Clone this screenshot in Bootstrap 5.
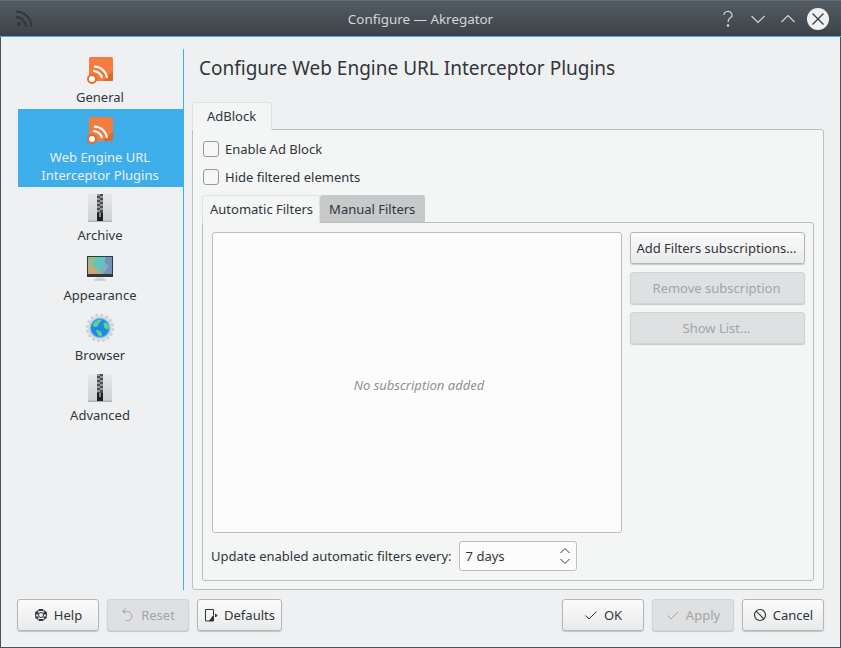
<!DOCTYPE html>
<html lang="en">
<head>
  <meta charset="UTF-8">
  <title>Configure — Akregator</title>
  <meta name="viewport" content="width=device-width, initial-scale=1">
  <link href="https://cdn.jsdelivr.net/npm/bootstrap@5.3.3/dist/css/bootstrap.min.css" rel="stylesheet">
  <style>
    html, body { height: 100%; }
    body { font-family: "Noto Sans", sans-serif; font-size: 13px; line-height: 18px; color: #31363b; background: #eff0f1; overflow: hidden; }
    svg { display: block; flex: none; }
    .kwin { width: 841px; height: 648px; }
    .ktitle { height: 37px; background: linear-gradient(#535c62, #3b4349); border-top: 1px solid #626b70; border-bottom: 1px solid #3daee9; color: #d3d6d8; padding: 0 12px 0 15px; }
    .ktitle-text { left: 0; right: 0; top: 9px; text-align: center; font-size: 13.4px; }
    .kctl { width: 30px; height: 22px; }
    .kclose { width: 22px; height: 22px; background: #eff0f1; border-radius: 50%; margin-left: 4px; }
    .kbody { border: 1px solid #4a5258; border-top: 0; padding: 12px 16px 16px; min-height: 0; }
    .kside { width: 166px; margin-left: 1px; margin-right: 8px; border-right: 1px solid #3daee9; border-radius: 0; padding: 0; }
    .kside .list-group-item { background: transparent; border: 0; border-radius: 0; margin: 0; padding: 5px 9px 3px 8px; color: #31363b; text-align: center; }
    .kside .list-group-item.active { margin-top: 0; background: #3daee9; color: #eff0f1; }
    .kside .list-group-item svg { margin: 0 auto 2px; }
    .khead { height: 53px; margin: 0 0 0 7px; font-size: 19px; font-weight: 400; line-height: 38px; color: #31363b; }
    .ktabs { border: 0; flex-wrap: nowrap; position: relative; z-index: 1; }
    .ktabs .nav-link { font-size: 13px; height: 28px; margin-bottom: -1px; padding: 4px 6px 4px 7px; color: #31363b; background: #c8c9cb; border: 1px solid #bcbebf; border-bottom-color: #bcbebf; border-radius: 3px 3px 0 0; }
    .ktabs .nav-link.active { background: #f4f5f5; border-bottom-color: #f4f5f5; color: #31363b; }
    .ktabs .ktab-main { width: 80px; padding-left: 14px; }
    .ktabs .ktab-manual { border-left: 0; border-color: #c8c9cb; border-bottom-color: #bcbebf; padding: 4px 9px 4px 9px; }
    .kpane { background: #f4f5f5; border: 1px solid #bcbebf; border-radius: 0 3px 3px 3px; min-height: 0; }
    .kpane-outer { padding: 9px 9px 8px; }
    .kpane-inner { padding: 9px 8px 9px 9px; gap: 8px; }
    .kcheck { height: 20px; min-height: 0; margin: 0 0 8px 1px; padding: 0; gap: 6px; }
    .kcheck .form-check-input { width: 16px; height: 16px; margin: 0; float: none; background-color: #f6f6f7; border: 1px solid #96999b; border-radius: 3px; }
    .kcheck .form-check-label { line-height: 20px; }
    .kblank { width: 410px; flex: none; background: #fcfcfc; border: 1px solid #bcbebf; border-radius: 3px; color: #8f9295; font-style: italic; padding: 4px 0 0 4px; }
    .kbtn { height: 32px; padding: 0 6px; font-size: 13px; line-height: 18px; color: #31363b; background: linear-gradient(#fbfbfb, #e9eaeb); border: 1px solid #b4b6b8; border-radius: 3px; box-shadow: 0 1px 1px rgba(0, 0, 0, .18); gap: 6px; }
    .kbtn:disabled { opacity: 1; color: #a3a5a8; background: #dfe0e1; border-color: #d2d3d4; }
    .kbtn-wide { width: 175px; padding: 0 7px 0 5px; }
    .kfoot { width: 82px; }
    .kfoot-auto { width: 85px; }
    .kcol { gap: 8px; width: 175px; margin-left: 8px; }
    .kspin { width: 118px; height: 30px; background: #fcfcfc; border: 1px solid #bcbebf; border-radius: 3px; padding: 0 5px 0 6px; margin-left: 7px; }
    .kupdate { height: 30px; padding-left: 0; margin-left: -1px; }
    .kmain { min-width: 0; }
    .kfooter { margin-top: 9px; }
  </style>
</head>
<body>
<div class="kwin d-flex flex-column">

  <!-- Title bar -->
  <div class="ktitle d-flex align-items-center position-relative flex-none">
    <svg width="18" height="18" viewBox="0 0 18 18" fill="none" stroke="#31383d" stroke-width="2"><circle cx="4" cy="14" r="2" fill="#31383d" stroke="none"/><path d="M1 7a10 10 0 0 1 10 10"/><path d="M1 1.500a15.500 15.500 0 0 1 15.500 15.500"/></svg>
    <div class="ktitle-text position-absolute">Configure — Akregator</div>
    <div class="ms-auto d-flex align-items-center">
      <div class="kctl d-flex align-items-center justify-content-center"><svg width="14" height="18" viewBox="0 0 14 18" fill="none" stroke="#d3d6d8" stroke-width="1.200"><path d="M3 5a4 3.500 0 1 1 6 3c-1.500 1-2 1.500-2 4"/><circle cx="7" cy="15.500" r=".7" fill="#d3d6d8"/></svg></div>
      <div class="kctl d-flex align-items-center justify-content-center"><svg width="16" height="10" viewBox="0 0 16 10" fill="none" stroke="#d3d6d8" stroke-width="1.200"><path d="M1.500 2l6.500 6.500 6.500-6.500"/></svg></div>
      <div class="kctl d-flex align-items-center justify-content-center"><svg width="16" height="10" viewBox="0 0 16 10" fill="none" stroke="#d3d6d8" stroke-width="1.200"><path d="M1.500 8l6.500-6.500 6.500 6.500"/></svg></div>
      <div class="kclose d-flex align-items-center justify-content-center"><svg width="14" height="14" viewBox="0 0 14 14" fill="none" stroke="#3b4349" stroke-width="1.400"><path d="M1.500 1.500l11 11M12.500 1.500l-11 11"/></svg></div>
    </div>
  </div>

  <div class="kbody d-flex flex-column flex-grow-1">
    <div class="d-flex flex-grow-1" style="min-height:0">

      <!-- Sidebar -->
      <div class="kside list-group flex-none">
        <div class="list-group-item">
          <svg width="32" height="32" viewBox="0 0 32 32"><rect x="5" y="3" width="24" height="24" rx="1.500" fill="#f47c3f"/><path d="M19 27l10-10v9a1 1 0 0 1-1 1z" fill="#dd6a30"/><g fill="none" stroke="#fff" stroke-width="2"><path d="M9 17a9 9 0 0 1 9 7"/><path d="M10 12.500a13 13 0 0 1 13 11.500"/></g><circle cx="8" cy="25" r="4" fill="#fff" stroke="#e8692c" stroke-width="2"/></svg>
          General
        </div>
        <div class="list-group-item active">
          <svg width="32" height="32" viewBox="0 0 32 32"><rect x="5" y="3" width="24" height="24" rx="1.500" fill="#f47c3f"/><path d="M19 27l10-10v9a1 1 0 0 1-1 1z" fill="#dd6a30"/><g fill="none" stroke="#fff" stroke-width="2"><path d="M9 17a9 9 0 0 1 9 7"/><path d="M10 12.500a13 13 0 0 1 13 11.500"/></g><circle cx="8" cy="25" r="4" fill="#fff" stroke="#e8692c" stroke-width="2"/></svg>
          Web Engine URL<br>Interceptor Plugins
        </div>
        <div class="list-group-item">
          <svg width="32" height="32" viewBox="0 0 32 32"><defs><linearGradient id="zipbg" x1="0" y1="0" x2="0" y2="1"><stop offset="0" stop-color="#e6e8e9"/><stop offset="1" stop-color="#cdd1d2"/></linearGradient></defs><rect x="4" y="2" width="24" height="28" fill="url(#zipbg)"/><rect x="4" y="28.500" width="24" height="1.500" fill="#aeb2b3"/><rect x="13" y="2" width="6" height="27" fill="#4a4e51"/><path d="M13 3h3M16 5h3M13 7h3M16 9h3M13 11h3M16 13h3M13 15h3M16 17h3M13 19h3" stroke="#dfe2e3" stroke-width="1"/><rect x="13" y="21" width="6" height="8" fill="#1e2022"/><rect x="15" y="21" width="2" height="4" fill="#878b8e"/></svg>
          Archive
        </div>
        <div class="list-group-item">
          <svg width="32" height="32" viewBox="0 0 32 32"><path d="M12.500 25h7l.5 3h-8z" fill="#d9dcdd"/><rect x="10" y="27.500" width="12" height="1" fill="#b8bbbd"/><rect x="3" y="4" width="26" height="21" fill="#35383b"/><rect x="4" y="5" width="24" height="17" fill="#6fb3bb"/><path d="M4 5h9l-4 8H4z" fill="#8fc08c"/><path d="M4 13h5l8 9H4z" fill="#c6a978"/><path d="M13 5h9l-5 17-8-9z" fill="#5fc6bf"/><path d="M22 5h6v17H17z" fill="#7391b6"/><path d="M20 10l5 4-6 8h-2z" fill="#86aeb4"/></svg>
          Appearance
        </div>
        <div class="list-group-item">
          <svg width="32" height="32" viewBox="0 0 32 32"><circle cx="16" cy="16" r="12" fill="#d6d9da"/><circle cx="16" cy="16" r="13" fill="none" stroke="#cfd2d3" stroke-width="2.500" stroke-dasharray="3 2.100"/><circle cx="16" cy="16" r="10" fill="#4fb4ee"/><circle cx="16" cy="16" r="9" fill="#1f8ae6"/><path d="M8.500 13c2-4 5-5.500 9-5.500 0 2-2 2.500-3 4.500s-1 3-3 3-2-1-3-2zM20 11c2-1 4 .5 5 3 0 2.500-1 3-2 4-1-2-3-1.500-3-3.500s-1-2.500 0-3.500zM12 18c3 0 6 2 6 4s-1 2.500-2 3c-2-2-3-4-4-7z" fill="#63cf8b"/></svg>
          Browser
        </div>
        <div class="list-group-item">
          <svg width="32" height="32" viewBox="0 0 32 32"><rect x="4" y="2" width="24" height="28" fill="url(#zipbg)"/><rect x="4" y="28.500" width="24" height="1.500" fill="#aeb2b3"/><rect x="13" y="2" width="6" height="27" fill="#4a4e51"/><path d="M13 3h3M16 5h3M13 7h3M16 9h3M13 11h3M16 13h3M13 15h3M16 17h3M13 19h3" stroke="#dfe2e3" stroke-width="1"/><rect x="13" y="21" width="6" height="8" fill="#1e2022"/><rect x="15" y="21" width="2" height="4" fill="#878b8e"/></svg>
          Advanced
        </div>
      </div>

      <!-- Main page -->
      <div class="kmain d-flex flex-column flex-grow-1">
        <h1 class="khead">Configure Web Engine URL Interceptor Plugins</h1>
        <ul class="nav nav-tabs ktabs">
          <li class="nav-item"><a class="nav-link active ktab-main" href="#">AdBlock</a></li>
        </ul>
        <div class="kpane kpane-outer d-flex flex-column flex-grow-1">
          <div class="form-check kcheck d-flex align-items-center">
            <input class="form-check-input" type="checkbox" id="enableAd">
            <label class="form-check-label" for="enableAd">Enable Ad Block</label>
          </div>
          <div class="form-check kcheck d-flex align-items-center">
            <input class="form-check-input" type="checkbox" id="hideEl">
            <label class="form-check-label" for="hideEl">Hide filtered elements</label>
          </div>

          <ul class="nav nav-tabs ktabs">
            <li class="nav-item"><a class="nav-link active" href="#">Automatic Filters</a></li>
            <li class="nav-item"><a class="nav-link ktab-manual" href="#">Manual Filters</a></li>
          </ul>
          <div class="kpane kpane-inner d-flex flex-column flex-grow-1">
            <div class="d-flex flex-grow-1" style="min-height:0">
              <div class="kblank d-flex align-items-center justify-content-center">No subscription added</div>
              <div class="kcol d-flex flex-column">
                <button class="btn kbtn kbtn-wide" type="button">Add Filters subscriptions...</button>
                <button class="btn kbtn kbtn-wide" type="button" disabled>Remove subscription</button>
                <button class="btn kbtn kbtn-wide" type="button" disabled>Show List...</button>
              </div>
            </div>
            <div class="kupdate d-flex align-items-center">
              <span>Update enabled automatic filters every:</span>
              <div class="kspin d-flex align-items-center justify-content-between">
                <span>7 days</span>
                <svg width="12" height="20" viewBox="0 0 12 20" fill="none" stroke="#31363b"><path d="M1.500 7l4.500-4.500 4.500 4.500"/><path d="M1.500 13l4.500 4.500 4.500-4.500"/></svg>
              </div>
            </div>
          </div>
        </div>
      </div>
    </div>

    <!-- Button row -->
    <div class="kfooter d-flex gap-2">
      <button class="btn kbtn kfoot d-flex align-items-center justify-content-center" type="button">
        <svg width="14" height="14" viewBox="0 0 14 14" fill="none" stroke="#31363b"><circle cx="7" cy="7" r="5.500"/><circle cx="7" cy="7" r="2.500"/><path d="M1.500 3.500h3v3h-3zM9.500 3.500h3v3h-3zM1.500 8.500h3v2h-3zM9.500 8.500h3v2h-3zM5 1h4v2H5zM5 11h4v2H5z" fill="#31363b" stroke="none"/></svg>
        Help
      </button>
      <button class="btn kbtn kfoot d-flex align-items-center justify-content-center" type="button" disabled>
        <svg width="14" height="14" viewBox="0 0 14 14" fill="none" stroke="#a3a5a8"><path d="M4.500.5L1.500 3.500l3.500 2"/><path d="M2 3.500c3-.5 5-.5 7 1 2.500 2 2.500 5.500 0 7.500-1.500 1-3 1-4.500.5"/></svg>
        Reset
      </button>
      <button class="btn kbtn kfoot-auto d-flex align-items-center justify-content-center" type="button">
        <svg width="14" height="14" viewBox="0 0 14 14" fill="none" stroke="#31363b"><path d="M1.500 1.500h8v6l-4 5.500h-4z"/><path d="M9.500 8L5.500 13h4z" fill="#31363b"/><path d="M11.500 6v3l1.500-1.500z" fill="#31363b"/></svg>
        Defaults
      </button>
      <button class="btn kbtn kfoot ms-auto d-flex align-items-center justify-content-center" type="button">
        <svg width="14" height="14" viewBox="0 0 14 14" fill="none" stroke="#31363b"><path d="M1.500 7.500l3.500 3.500 7.500-7.500"/></svg>
        OK
      </button>
      <button class="btn kbtn kfoot d-flex align-items-center justify-content-center" type="button" disabled>
        <svg width="14" height="14" viewBox="0 0 14 14" fill="none" stroke="#a3a5a8"><path d="M1.500 7.500l3.500 3.500 7.500-7.500"/></svg>
        Apply
      </button>
      <button class="btn kbtn kfoot d-flex align-items-center justify-content-center" type="button">
        <svg width="14" height="14" viewBox="0 0 14 14" fill="none" stroke="#31363b" stroke-width="1.200"><circle cx="7" cy="7" r="5.500"/><path d="M3.100 3.100l7.800 7.800"/></svg>
        Cancel
      </button>
    </div>
  </div>
</div>
<script src="https://cdn.jsdelivr.net/npm/bootstrap@5.3.3/dist/js/bootstrap.bundle.min.js"></script>
</body>
</html>
